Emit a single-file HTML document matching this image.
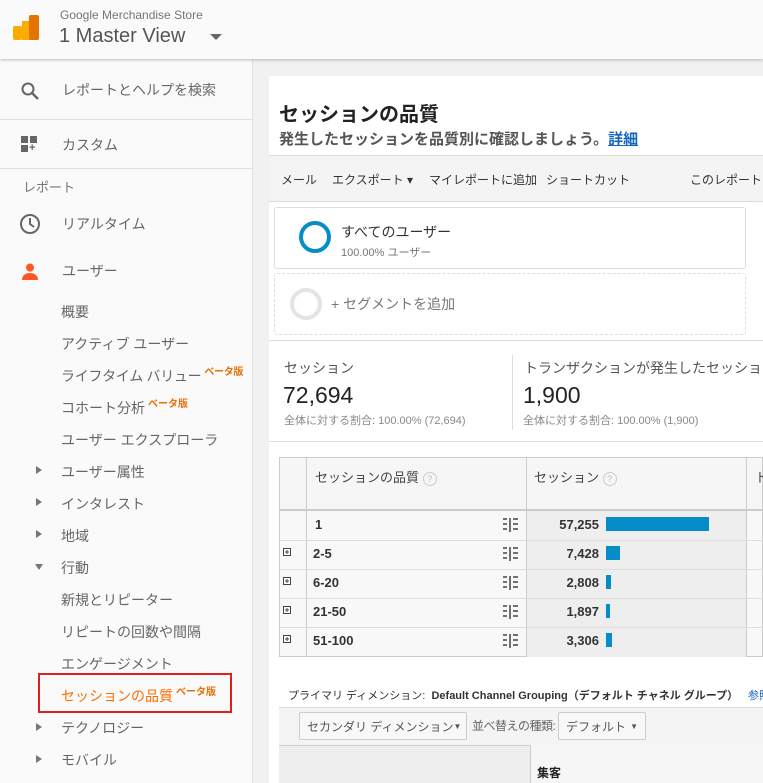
<!DOCTYPE html>
<html><head><meta charset="utf-8"><style>
*{margin:0;padding:0;box-sizing:border-box}
body{width:763px;height:783px;overflow:hidden;background:#f1f1f1;font-family:"Liberation Sans","Noto Sans CJK JP",sans-serif;position:relative;color:#333}
.a{position:absolute;white-space:nowrap}
#hdr{position:absolute;left:0;top:0;width:763px;height:59px;background:#fafafa;box-shadow:0 1px 3px rgba(0,0,0,.25);z-index:2}
#side{position:absolute;left:0;top:59px;width:253px;height:724px;background:#fafafa;border-right:1px solid #e0e0e0}
.sb{font-size:14px;color:#666}
.tri{position:absolute;left:36px;width:0;height:0;border-top:4px solid transparent;border-bottom:4px solid transparent;border-left:6px solid #777}
.beta{font-size:10px;color:#e8710a;font-weight:bold;position:relative;top:-6px;margin-left:3px}
#panel{position:absolute;left:269px;top:76px;width:494px;height:707px;background:#fff}
.cell{position:absolute;font-size:13px}
.dd{display:flex;align-items:center;justify-content:space-between;white-space:nowrap}
</style></head><body>
<div id="hdr">
 <div class="a" style="left:13px;top:26px;width:9px;height:14px;background:#f9ab00;border-radius:2px"></div>
 <div class="a" style="left:22px;top:21px;width:9px;height:19px;background:#f9ab00"></div>
 <div class="a" style="left:29px;top:15px;width:10px;height:25px;background:#e37400;border-radius:2px"></div>
 <div class="a" style="left:60px;top:8px;font-size:12px;color:#757575">Google Merchandise Store</div>
 <div class="a" style="left:59px;top:25px;font-size:20px;color:#555">1 Master View</div>
 <div class="a" style="left:210px;top:34px;border-left:6px solid transparent;border-right:6px solid transparent;border-top:6px solid #666"></div>
</div>
<div id="side">
 <svg class="a" style="left:20px;top:22px" width="20" height="20" viewBox="0 0 20 20"><circle cx="8" cy="8" r="5.5" fill="none" stroke="#666" stroke-width="2"/><path d="M12 12 L18 18" stroke="#666" stroke-width="2.4"/></svg>
 <div class="a sb" style="left:62px;top:21px">レポートとヘルプを検索</div>
 <div class="a" style="left:0;top:60px;width:253px;border-top:1px solid #e0e0e0"></div>
 <div class="a" style="left:21px;top:77px;width:7px;height:7px;background:#666"></div>
 <div class="a" style="left:30px;top:77px;width:7px;height:7px;background:#666"></div>
 <div class="a" style="left:21px;top:86px;width:7px;height:7px;background:#666"></div>
 <div class="a" style="left:29px;top:83px;font-size:11px;color:#666;font-weight:bold">+</div>
 <div class="a sb" style="left:62px;top:76px">カスタム</div>
 <div class="a" style="left:0;top:109px;width:253px;border-top:1px solid #e0e0e0"></div>
 <div class="a" style="left:23px;top:118px;font-size:13px;color:#777">レポート</div>
 <svg class="a" style="left:19px;top:154px" width="22" height="22" viewBox="0 0 22 22"><circle cx="11" cy="11" r="9" fill="none" stroke="#666" stroke-width="2"/><path d="M11 5v6l4 3" fill="none" stroke="#666" stroke-width="2"/></svg>
 <div class="a sb" style="left:62px;top:155px">リアルタイム</div>
 <svg class="a" style="left:21px;top:204px" width="18" height="18" viewBox="0 0 18 18"><circle cx="9" cy="4.5" r="4" fill="#ff5722"/><path d="M1 17c0-5 4-7 8-7s8 2 8 7z" fill="#ff5722"/></svg>
 <div class="a sb" style="left:62px;top:202px">ユーザー</div>
 <div class="a sb" style="left:61px;top:243px">概要</div>
 <div class="a sb" style="left:61px;top:275px">アクティブ ユーザー</div>
 <div class="a sb" style="left:61px;top:307px;letter-spacing:-0.3px">ライフタイム バリュー<span class="beta">ベータ版</span></div>
 <div class="a sb" style="left:61px;top:339px">コホート分析<span class="beta">ベータ版</span></div>
 <div class="a sb" style="left:61px;top:371px">ユーザー エクスプローラ</div>
 <div class="tri" style="top:407px"></div><div class="a sb" style="left:61px;top:403px">ユーザー属性</div>
 <div class="tri" style="top:439px"></div><div class="a sb" style="left:61px;top:435px">インタレスト</div>
 <div class="tri" style="top:471px"></div><div class="a sb" style="left:61px;top:467px">地域</div>
 <div class="a" style="left:35px;top:505px;border-left:4px solid transparent;border-right:4px solid transparent;border-top:6px solid #777"></div><div class="a sb" style="left:61px;top:499px">行動</div>
 <div class="a sb" style="left:61px;top:531px">新規とリピーター</div>
 <div class="a sb" style="left:61px;top:563px">リピートの回数や間隔</div>
 <div class="a sb" style="left:61px;top:595px">エンゲージメント</div>
 <div class="a" style="left:38px;top:614px;width:194px;height:40px;border:2px solid #e02020"></div>
 <div class="a sb" style="left:61px;top:627px;color:#ff6d00">セッションの品質<span class="beta">ベータ版</span></div>
 <div class="tri" style="top:664px"></div><div class="a sb" style="left:61px;top:659px">テクノロジー</div>
 <div class="tri" style="top:696px"></div><div class="a sb" style="left:61px;top:691px">モバイル</div>
</div>
<div id="panel">
 <div class="a" style="left:10px;top:22px;font-size:20px;font-weight:bold;color:#222">セッションの品質</div>
 <div class="a" style="left:10px;top:52px;font-size:15px;font-weight:bold;color:#555">発生したセッションを品質別に確認しましょう。<span style="color:#1565c0;text-decoration:underline">詳細</span></div>
 <div class="a" style="left:0;top:79px;width:494px;height:47px;background:#f4f4f4;border-top:1px solid #ddd;border-bottom:1px solid #ddd"></div>
 <div class="a" style="left:12px;top:95px;font-size:12px;color:#333">メール</div>
 <div class="a" style="left:63px;top:95px;font-size:12px;color:#333">エクスポート ▾</div>
 <div class="a" style="left:160px;top:95px;font-size:12px;color:#333">マイレポートに追加</div>
 <div class="a" style="left:277px;top:95px;font-size:12px;color:#333">ショートカット</div>
 <div class="a" style="left:421px;top:95px;font-size:12px;color:#333">このレポート</div>
 <div class="a" style="left:5px;top:131px;width:472px;height:62px;border:1px solid #ddd;border-radius:3px"></div>
 <div class="a" style="left:30px;top:145px;width:32px;height:32px;border:4px solid #058dc7;border-radius:50%"></div>
 <div class="a" style="left:72px;top:146px;font-size:14px;color:#333">すべてのユーザー</div>
 <div class="a" style="left:72px;top:168px;font-size:11px;color:#777">100.00% ユーザー</div>
 <div class="a" style="left:5px;top:197px;width:472px;height:62px;border:1px dashed #ddd;border-radius:3px"></div>
 <div class="a" style="left:21px;top:212px;width:32px;height:32px;border:4px solid #e4e4e4;border-radius:50%"></div>
 <div class="a" style="left:62px;top:218px;font-size:14px;color:#777">+ セグメントを追加</div>
 <div class="a" style="left:0;top:264px;width:494px;border-top:1px solid #ddd"></div>
 <div class="a" style="left:15px;top:282px;font-size:14px;color:#555">セッション</div>
 <div class="a" style="left:14px;top:306px;font-size:23px;color:#222">72,694</div>
 <div class="a" style="left:15px;top:336px;font-size:11px;color:#888">全体に対する割合: 100.00% (72,694)</div>
 <div class="a" style="left:243px;top:279px;height:75px;border-left:1px solid #ddd"></div>
 <div class="a" style="left:255px;top:282px;font-size:14px;color:#555">トランザクションが発生したセッション</div>
 <div class="a" style="left:254px;top:306px;font-size:23px;color:#222">1,900</div>
 <div class="a" style="left:254px;top:336px;font-size:11px;color:#888">全体に対する割合: 100.00% (1,900)</div>
 <div class="a" style="left:0;top:365px;width:494px;border-top:1px solid #ddd"></div>
</div>
<!-- table -->
<div class="a" style="left:279px;top:457px;width:484px;height:200px;border:1px solid #ccc;background:#f8f8f8"></div>
<div class="a" style="left:279px;top:457px;width:484px;height:54px;background:#f6f6f6;border:1px solid #ccc;border-bottom:2px solid #ccc"></div>
<div class="a" style="left:526px;top:511px;width:220px;height:146px;background:#eee"></div>
<div class="a" style="left:306px;top:457px;height:200px;border-left:1px solid #ccc"></div>
<div class="a" style="left:526px;top:457px;height:200px;border-left:1px solid #ccc"></div>
<div class="a" style="left:746px;top:457px;height:200px;border-left:1px solid #ccc"></div>
<div class="a" style="left:315px;top:467px;font-size:13px;color:#444">セッションの品質 <span style="display:inline-block;width:14px;height:14px;border:1px solid #ccc;border-radius:50%;font-size:9px;color:#bbb;text-align:center;line-height:12px">?</span></div>
<div class="a" style="left:534px;top:467px;font-size:13px;color:#444">セッション <span style="display:inline-block;width:14px;height:14px;border:1px solid #ccc;border-radius:50%;font-size:9px;color:#bbb;text-align:center;line-height:12px">?</span></div>
<div class="a" style="left:755px;top:467px;font-size:13px;color:#444">ト</div>
<div class="a" style="left:280px;top:540px;width:483px;border-top:1px solid #ddd"></div>
<div class="a" style="left:280px;top:569px;width:483px;border-top:1px solid #ddd"></div>
<div class="a" style="left:280px;top:598px;width:483px;border-top:1px solid #ddd"></div>
<div class="a" style="left:280px;top:627px;width:483px;border-top:1px solid #ddd"></div>

<div class="cell a" style="left:315px;top:517px;font-weight:bold">1</div>
<div class="cell a" style="left:313px;top:546px;font-weight:bold">2-5</div>
<div class="cell a" style="left:313px;top:575px;font-weight:bold">6-20</div>
<div class="cell a" style="left:313px;top:604px;font-weight:bold">21-50</div>
<div class="cell a" style="left:313px;top:633px;font-weight:bold">51-100</div>
<div class="cell a" style="left:544px;top:517px;width:55px;text-align:right;font-weight:bold">57,255</div>
<div class="cell a" style="left:544px;top:546px;width:55px;text-align:right;font-weight:bold">7,428</div>
<div class="cell a" style="left:544px;top:575px;width:55px;text-align:right;font-weight:bold">2,808</div>
<div class="cell a" style="left:544px;top:604px;width:55px;text-align:right;font-weight:bold">1,897</div>
<div class="cell a" style="left:544px;top:633px;width:55px;text-align:right;font-weight:bold">3,306</div>
<div class="a" style="left:606px;top:517px;width:103px;height:14px;background:#058dc7"></div>
<div class="a" style="left:606px;top:546px;width:14px;height:14px;background:#058dc7"></div>
<div class="a" style="left:606px;top:575px;width:5px;height:14px;background:#058dc7"></div>
<div class="a" style="left:606px;top:604px;width:4px;height:14px;background:#058dc7"></div>
<div class="a" style="left:606px;top:633px;width:6px;height:14px;background:#058dc7"></div>
<svg class="a" style="left:503px;top:518px" width="15" height="130" viewBox="0 0 15 130">
<g id="ic" stroke="#444" stroke-width="1.5"><path d="M0 1h4M0 6h4M0 11h4M7 0v14M10 1h5M10 6h5M10 11h5"/></g>
<use href="#ic" y="29"/><use href="#ic" y="58"/><use href="#ic" y="87"/><use href="#ic" y="116"/>
</svg>
<svg class="a" style="left:283px;top:548px" width="9" height="100" viewBox="0 0 9 100">
<g id="pl" fill="#fff" stroke="#444"><rect x="0.5" y="0.5" width="7" height="7"/><path d="M2 4h4M4 2v4"/></g>
<use href="#pl" y="29"/><use href="#pl" y="58"/><use href="#pl" y="87"/>
</svg>
<div class="a" style="left:288px;top:687px;font-size:11px;color:#333">プライマリ ディメンション:&nbsp; <b>Default Channel Grouping（デフォルト チャネル グループ）</b></div>
<div class="a" style="left:748px;top:687px;font-size:11px;color:#1565c0">参照</div>
<div class="a" style="left:279px;top:707px;width:484px;height:38px;background:#f4f4f4;border-top:1px solid #ddd"></div>
<div class="a dd" style="left:299px;top:712px;width:168px;height:28px;border:1px solid #ccc;border-radius:2px;background:#f8f8f8;font-size:12px;color:#555;padding:0 7px"><span>セカンダリ ディメンション</span><span style="font-size:8px">▼</span></div>
<div class="a" style="left:472px;top:717px;font-size:12px;color:#666;letter-spacing:-0.5px">並べ替えの種類:</div>
<div class="a dd" style="left:558px;top:712px;width:88px;height:28px;border:1px solid #ccc;border-radius:2px;background:#f8f8f8;font-size:12px;color:#555;padding:0 7px"><span>デフォルト</span><span style="font-size:8px">▼</span></div>
<div class="a" style="left:279px;top:745px;width:484px;height:38px;background:#eee;border-top:1px solid #ccc"></div>
<div class="a" style="left:530px;top:745px;width:233px;height:38px;background:#f6f6f6;border-left:1px solid #ccc"></div>
<div class="a" style="left:537px;top:764px;font-size:12px;font-weight:bold;color:#222">集客</div>
</body></html>
